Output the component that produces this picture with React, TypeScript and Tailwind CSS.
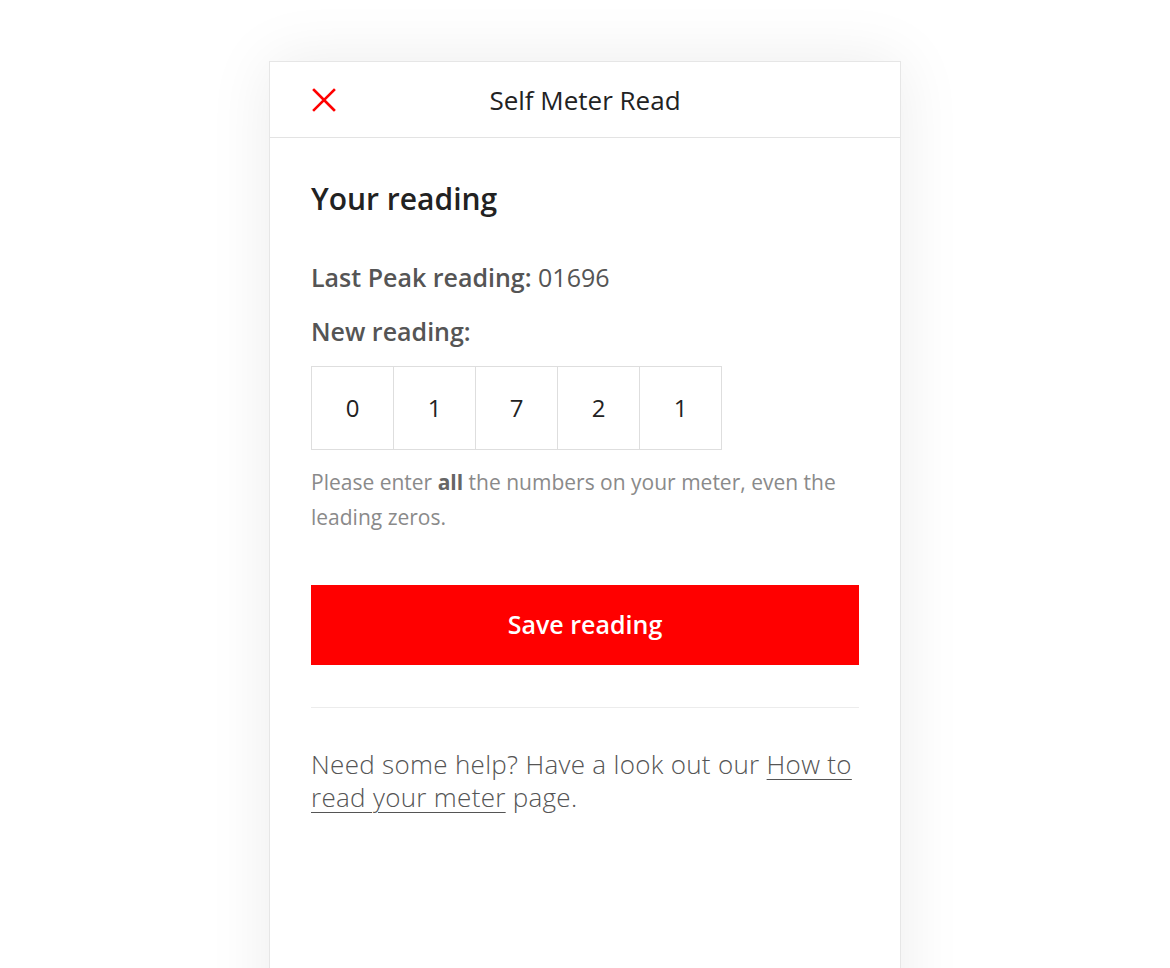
import React from "react";

export default function App() {
  const digits = ["0", "1", "7", "2", "1"];
  return (
    <div className="w-[1170px] h-[968px] bg-white overflow-hidden relative" style={{ fontFamily: "'Open Sans', Lato, sans-serif" }}>
      <div className="absolute left-[269px] top-[61px] w-[632px] h-[1000px] bg-white border border-[#e6e6e6] shadow-[0_0_60px_rgba(0,0,0,0.08)]">
        <div className="h-[76px] border-b border-[#e3e3e3] flex items-center relative">
          <svg className="absolute left-[42px] top-[26px]" width="24" height="24" viewBox="0 0 24 24">
            <path d="M2 2 L22 22 M22 2 L2 22" stroke="#ff0000" strokeWidth="2.6" strokeLinecap="square" fill="none" />
          </svg>
          <div className="w-full text-center text-[26px] leading-[32px] text-[#222] font-medium">Self Meter Read</div>
        </div>
        <div className="px-[41px]">
          <h1 className="mt-[39px] text-[30px] leading-[44px] font-semibold text-[#222]">Your reading</h1>
          <div className="mt-[39px] text-[25px] leading-[34px] text-[#555]">
            <span className="font-semibold">Last Peak reading:</span> <span>01696</span>
          </div>
          <div className="mt-[20px] text-[25px] leading-[34px] text-[#555] font-semibold">New reading:</div>
          <div className="mt-[18px] flex">
            {digits.map((d, i) => (
              <div
                key={i}
                className={`w-[83px] h-[84px] border border-[#dedede] flex items-center justify-center text-[24px] text-[#222] ${i > 0 ? "-ml-px" : ""}`}
              >
                {d}
              </div>
            ))}
          </div>
          <p className="mt-[15px] text-[21px] leading-[35px] text-[#8a8a8a]">
            Please enter <span className="font-bold text-[#666]">all</span> the numbers on your meter, even the leading zeros.
          </p>
          <button className="mt-[50px] w-full h-[80px] bg-[#ff0000] text-white text-[25px] font-semibold flex items-center justify-center">
            Save reading
          </button>
          <div className="mt-[42px] border-t border-[#ececec]" />
          <p className="mt-[40px] text-[26px] leading-[33px] tracking-[0.3px] text-[#555] font-light">
            Need some help? Have a look out our <span className="underline underline-offset-[5px] decoration-1">How to read your meter</span> page.
          </p>
        </div>
      </div>
    </div>
  );
}
